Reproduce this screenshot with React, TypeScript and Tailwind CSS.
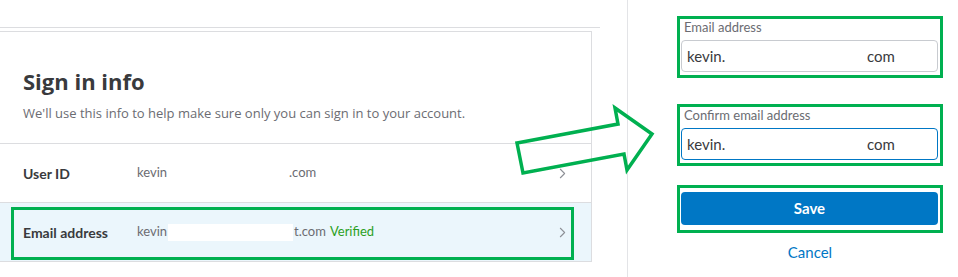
import { ChevronRight } from 'lucide-react';

const font = { fontFamily: 'Lato, "Open Sans", Arial, sans-serif' };
const wide = { fontFamily: '"Open Sans", Lato, Arial, sans-serif' };

function InfoRow({ label, highlighted }: { label: string; highlighted?: boolean }) {
  return (
    <div
      className={`relative flex items-center h-[59px] border-b border-[#dcdde0] pl-[23px] pr-[20px] ${
        highlighted ? 'bg-[#ebf6fc]' : 'bg-white'
      }`}
    >
      <span className="w-[114px] text-[14px] font-bold text-[#393a3d]">{label}</span>
      <span className="flex items-center text-[13px] text-[#6b6c72]">
        kevin
        {highlighted ? (
          <span className="inline-block w-[125px] h-[17px] bg-white mx-px" />
        ) : (
          <span className="inline-block w-[122px]" />
        )}
        {highlighted ? 't.com' : '.com'}
        {highlighted && <span className="ml-1 text-[#2ca01c]">Verified</span>}
      </span>
      <ChevronRight className="ml-auto w-[17px] h-[17px] text-[#8d9096]" strokeWidth={1.5} />
      {highlighted && (
        <div className="absolute left-[11px] top-[4px] w-[563px] h-[53px] border-[3px] border-[#00b050]" />
      )}
    </div>
  );
}

function EmailField({ label, focused }: { label: string; focused?: boolean }) {
  return (
    <div className="border-[3px] border-[#00b050] pl-px pr-[2px] pb-[3px]">
      <div className="text-[13px] leading-[16px] pb-[5px] pl-[3px] text-[#6b6c72]">{label}</div>
      <div
        className={`flex items-center h-[32px] rounded-[4px] border px-[5px] text-[15px] text-[#393a3d] ${
          focused ? 'border-[#0077c5] border-[1.5px]' : 'border-[#c8cbd0]'
        }`}
      >
        <span className="w-[180px]">kevin.</span>
        <span>com</span>
      </div>
    </div>
  );
}

export default function App() {
  return (
    <div className="relative flex w-[958px] h-[277px] bg-white overflow-hidden" style={font}>
      {/* Left card */}
      <div className="w-[628px] shrink-0 border-r border-[#e3e4e7]">
        <div className="mt-[27px] w-[600px] border-t border-[#dcdde0]" />
        <div className="mt-[3px] w-[592px] border-t border-r border-[#dcdde0]">
          <div className="pl-[23px] pt-[34px] pb-[21px] border-b border-[#dcdde0]" style={wide}>
            <h1 className="text-[22px] leading-[30px] font-bold text-[#393a3d]">Sign in info</h1>
            <p className="mt-[8px] text-[13px] leading-[18px] text-[#6b6c72]">
              We'll use this info to help make sure only you can sign in to your account.
            </p>
          </div>
          <InfoRow label="User ID" />
          <InfoRow label="Email address" highlighted />
        </div>
      </div>

      {/* Right form */}
      <div className="pl-[49px] pt-[16px] w-[315px]">
        <div className="w-[266px]">
          <EmailField label="Email address" />
          <div className="mt-[26px]">
            <EmailField label="Confirm email address" focused />
          </div>
          <div className="mt-[19px] border-[3px] border-[#00b050] pt-[4px] pb-[5px] pl-px pr-[2px]">
            <button className="w-full h-[33px] rounded-[4px] bg-[#0077c5] text-white text-[15px] font-bold">
              Save
            </button>
          </div>
          <div className="mt-[8px] text-center text-[15px] text-[#0077c5]">Cancel</div>
        </div>
      </div>

      {/* Annotation arrow */}
      <svg className="absolute left-0 top-0 pointer-events-none" width="958" height="277">
        <polygon
          points="517,143 618,124 615,108 652,134 627,170 624,154 523,173"
          fill="none"
          stroke="#00b050"
          strokeWidth="3.5"
          strokeLinejoin="miter"
        />
      </svg>
    </div>
  );
}
